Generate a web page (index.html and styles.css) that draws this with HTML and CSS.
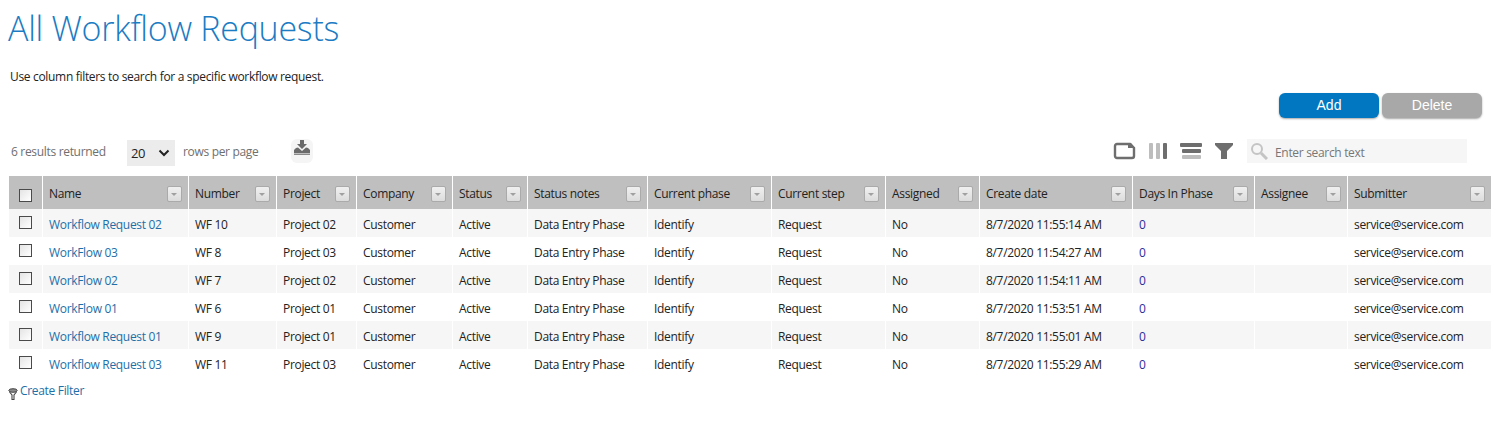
FILE: index.html
```html
<!DOCTYPE html>
<html lang="en">
<head>
<meta charset="utf-8">
<title>All Workflow Requests</title>
<link rel="stylesheet" href="styles.css">
</head>
<body>
<h1 class="title">All Workflow Requests</h1>
<p class="intro">Use column filters to search for a specific workflow request.</p>
<div class="actions">
  <button class="btn btn-add">Add</button>
  <button class="btn btn-delete">Delete</button>
</div>
<div class="toolbar">
  <div class="pager">
    <span class="results">6 results returned</span>
    <span class="select-box"><span>20</span><svg width="12" height="8" viewBox="0 0 12 8"><path d="M1.500 1.500 6 6l4.500-4.500" fill="none" stroke="#222" stroke-width="2"/></svg></span>
    <span class="rows">rows per page</span>
    <span class="export"><svg width="16" height="15" viewBox="0 0 16 15"><path d="M6 0h4v4h3l-5 5-5-5h3z" fill="#6b6b6b"/><path d="M0 13v-3l2-2 2-.500 4 3.500 4-3.500 2 .500 2 2v3z" fill="#6b6b6b"/><rect x="0" y="13.500" width="16" height="1.500" fill="#8a8a8a"/></svg></span>
  </div>
  <div class="tools">
    <svg class="tool" width="23" height="18" viewBox="0 0 23 18"><path d="M4 2h13l4 4v8a2 2 0 0 1-2 2H4a2 2 0 0 1-2-2V4a2 2 0 0 1 2-2z" fill="none" stroke="#6e6e6e" stroke-width="2.400"/><path d="M15 1h3l4 5h-7z" fill="#6e6e6e"/></svg>
    <svg class="tool" width="19" height="18" viewBox="0 0 19 18"><rect x="0" y="1" width="4" height="16" rx="1" fill="#bdbdbd"/><rect x="7" y="1" width="4" height="16" rx="1" fill="#bdbdbd"/><rect x="14" y="1" width="4" height="16" rx="1" fill="#6e6e6e"/></svg>
    <svg class="tool" width="23" height="18" viewBox="0 0 23 18"><rect x="0" y="1" width="22" height="4" rx="1" fill="#6e6e6e"/><rect x="2" y="7" width="19" height="4" rx="1" fill="#6e6e6e"/><rect x="2" y="13" width="19" height="4" rx="1" fill="#bdbdbd"/></svg>
    <svg class="tool" width="18" height="18" viewBox="0 0 18 18"><path d="M0 1h18v2l-6 6v8H6V9L0 3z" fill="#6e6e6e"/></svg>
    <div class="search">
      <svg class="search-icon" width="18" height="18" viewBox="0 0 18 18"><circle cx="7" cy="7" r="5" fill="none" stroke="#c4c4c4" stroke-width="2"/><path d="m11 11 6 6" stroke="#c4c4c4" stroke-width="3"/></svg>
      <span class="search-text">Enter search text</span>
    </div>
  </div>
</div>
<table class="grid">
  <colgroup>
    <col class="c0"><col class="c1"><col class="c2"><col class="c3"><col class="c4"><col class="c5"><col class="c6"><col class="c7"><col class="c8"><col class="c9"><col class="c10"><col class="c11"><col class="c12"><col class="c13">
  </colgroup>
  <thead>
    <tr>
      <th class="check-cell"><span class="check head-check"></span></th>
      <th><div class="th-in"><span>Name</span><span class="menu"></span></div></th>
      <th><div class="th-in"><span>Number</span><span class="menu"></span></div></th>
      <th><div class="th-in"><span>Project</span><span class="menu"></span></div></th>
      <th><div class="th-in"><span>Company</span><span class="menu"></span></div></th>
      <th><div class="th-in"><span>Status</span><span class="menu"></span></div></th>
      <th><div class="th-in"><span>Status notes</span><span class="menu"></span></div></th>
      <th><div class="th-in"><span>Current phase</span><span class="menu"></span></div></th>
      <th><div class="th-in"><span>Current step</span><span class="menu"></span></div></th>
      <th><div class="th-in"><span>Assigned</span><span class="menu"></span></div></th>
      <th><div class="th-in"><span>Create date</span><span class="menu"></span></div></th>
      <th><div class="th-in"><span>Days In Phase</span><span class="menu"></span></div></th>
      <th><div class="th-in"><span>Assignee</span><span class="menu"></span></div></th>
      <th><div class="th-in"><span>Submitter</span><span class="menu"></span></div></th>
    </tr>
  </thead>
  <tbody>
    <tr><td class="check-cell"><span class="check"></span></td><td><a href="#">Workflow Request 02</a></td><td>WF 10</td><td>Project 02</td><td>Customer</td><td>Active</td><td>Data Entry Phase</td><td>Identify</td><td>Request</td><td>No</td><td>8/7/2020 11:55:14 AM</td><td class="days">0</td><td></td><td>service@service.com</td></tr>
    <tr><td class="check-cell"><span class="check"></span></td><td><a href="#">WorkFlow 03</a></td><td>WF 8</td><td>Project 03</td><td>Customer</td><td>Active</td><td>Data Entry Phase</td><td>Identify</td><td>Request</td><td>No</td><td>8/7/2020 11:54:27 AM</td><td class="days">0</td><td></td><td>service@service.com</td></tr>
    <tr><td class="check-cell"><span class="check"></span></td><td><a href="#">WorkFlow 02</a></td><td>WF 7</td><td>Project 02</td><td>Customer</td><td>Active</td><td>Data Entry Phase</td><td>Identify</td><td>Request</td><td>No</td><td>8/7/2020 11:54:11 AM</td><td class="days">0</td><td></td><td>service@service.com</td></tr>
    <tr><td class="check-cell"><span class="check"></span></td><td><a href="#">WorkFlow 01</a></td><td>WF 6</td><td>Project 01</td><td>Customer</td><td>Active</td><td>Data Entry Phase</td><td>Identify</td><td>Request</td><td>No</td><td>8/7/2020 11:53:51 AM</td><td class="days">0</td><td></td><td>service@service.com</td></tr>
    <tr><td class="check-cell"><span class="check"></span></td><td><a href="#">Workflow Request 01</a></td><td>WF 9</td><td>Project 01</td><td>Customer</td><td>Active</td><td>Data Entry Phase</td><td>Identify</td><td>Request</td><td>No</td><td>8/7/2020 11:55:01 AM</td><td class="days">0</td><td></td><td>service@service.com</td></tr>
    <tr><td class="check-cell"><span class="check"></span></td><td><a href="#">Workflow Request 03</a></td><td>WF 11</td><td>Project 03</td><td>Customer</td><td>Active</td><td>Data Entry Phase</td><td>Identify</td><td>Request</td><td>No</td><td>8/7/2020 11:55:29 AM</td><td class="days">0</td><td></td><td>service@service.com</td></tr>
  </tbody>
</table>
<div class="filter">
  <svg width="10" height="12" viewBox="0 0 10 12"><path d="M1.500 4 4 7v4.500h2V7l2.500-3" fill="none" stroke="#444" stroke-width="1.100"/><ellipse cx="5" cy="2.500" rx="4.200" ry="1.800" fill="#8a8a8a" stroke="#444"/></svg>
  <a href="#">Create Filter</a>
</div>
</body>
</html>
```
FILE: styles.css
```css
* { box-sizing: border-box; }
html, body { margin: 0; padding: 0; background: #fff; }
body {
  width: 1500px;
  height: 434px;
  overflow: hidden;
  font-family: "Open Sans", "Noto Sans", sans-serif;
  font-size: 12px;
  letter-spacing: -0.32px;
  color: #222;
}
.title {
  margin: 0;
  padding: 5px 0 0 8px;
  height: 68px;
  font-size: 34px;
  line-height: 46px;
  font-weight: 300;
  letter-spacing: -0.27px;
  color: #1b7cc4;
}
.intro {
  margin: 0;
  padding-left: 10px;
  height: 25px;
  line-height: 17px;
  color: #222;
}
.actions {
  display: flex;
  justify-content: flex-end;
  gap: 3px;
  padding-right: 18px;
  height: 44px;
}
.btn {
  width: 100px;
  height: 25px;
  padding: 0 0 2px;
  border: 0;
  border-radius: 6px;
  color: #fff;
  font-family: "Liberation Sans", sans-serif;
  font-size: 14px;
  box-shadow: 0 1px 2px rgba(0, 0, 0, 0.35);
}
.btn-add { background: #0077c0; }
.btn-delete { background: #a8a8a8; }
.toolbar {
  display: flex;
  justify-content: space-between;
  align-items: flex-start;
  height: 39px;
  padding: 0 33px 0 11px;
  color: #6f6f6f;
}
.pager { display: flex; align-items: flex-start; }
.results { width: 116px; margin-top: 2px; line-height: 26px; }
.select-box {
  display: flex;
  align-items: center;
  justify-content: space-between;
  width: 48px;
  height: 26px;
  margin-top: 3px;
  padding: 0 5px 0 4px;
  background: #ececec;
  color: #222;
  font-size: 13px;
}
.rows { margin: 2px 0 0 8px; line-height: 26px; }
.export {
  display: flex;
  justify-content: center;
  width: 22px;
  height: 24px;
  margin: 2px 0 0 33px;
  padding-top: 1px;
  background: #f5f5f5;
  border-radius: 6px;
}
.tools { display: flex; align-items: flex-start; padding-top: 5px; }
.tool { margin-right: 12px; }
.tool:nth-child(1) { margin-right: 13px; }
.tool:nth-child(4) { margin-right: 14px; }
.search {
  display: flex;
  align-items: center;
  width: 220px;
  height: 24px;
  margin-top: -3px;
  background: #f6f6f6;
  color: #777;
}
.search-icon { margin: 0 5px 0 3px; }
.search-text { margin-left: 2px; padding-top: 2px; }
.grid {
  table-layout: fixed;
  border-collapse: separate;
  border-spacing: 0;
  width: 1482px;
  margin-left: 9px;
}
.c0 { width: 34px; }
.c1 { width: 146px; }
.c2 { width: 88px; }
.c3 { width: 80px; }
.c4 { width: 96px; }
.c5 { width: 75px; }
.c6 { width: 120px; }
.c7 { width: 124px; }
.c8 { width: 114px; }
.c9 { width: 94px; }
.c10 { width: 153px; }
.c11 { width: 122px; }
.c12 { width: 93px; }
.c13 { width: 143px; }
th, td {
  padding: 0 0 0 6px;
  border-right: 1px solid #fff;
  text-align: left;
  font-weight: 400;
  white-space: nowrap;
  overflow: hidden;
}
th:last-child, td:last-child { border-right: 0; }
th { height: 33px; background: #bfbfbf; color: #222; }
td { height: 28px; padding-top: 2px; color: #222; }
tbody tr:nth-child(odd) td { background: #f6f6f6; }
.check-cell { padding: 0; text-align: center; }
td.check-cell { padding: 0; }
.th-in { display: flex; align-items: center; justify-content: space-between; padding: 1px 6px 0 0; }
.menu {
  position: relative;
  width: 15px;
  height: 16px;
  margin-top: 1px;
  background: linear-gradient(#f0f0f0, #dcdcdc);
  border: 1px solid #aaa;
  border-radius: 2px;
}
.menu::after {
  content: "";
  position: absolute;
  left: 3px;
  top: 6px;
  border: 3.500px solid transparent;
  border-top: 3.500px solid #a0a0a0;
  border-bottom: 0;
}
.check {
  display: inline-block;
  width: 13px;
  height: 13px;
  background: linear-gradient(135deg, #e4e4e4, #fff);
  border: 1px solid #4a4a4a;
  vertical-align: middle;
}
td .check { position: relative; top: -2px; }
.head-check { position: relative; top: 2px; }
a { color: #1d6fa8; text-decoration: none; }
.days { color: #2c2c9e; }
.filter {
  display: flex;
  align-items: flex-start;
  padding: 6px 0 0 8px;
  line-height: 16px;
}
.filter svg { margin: 5px 2px 0 0; }
```
